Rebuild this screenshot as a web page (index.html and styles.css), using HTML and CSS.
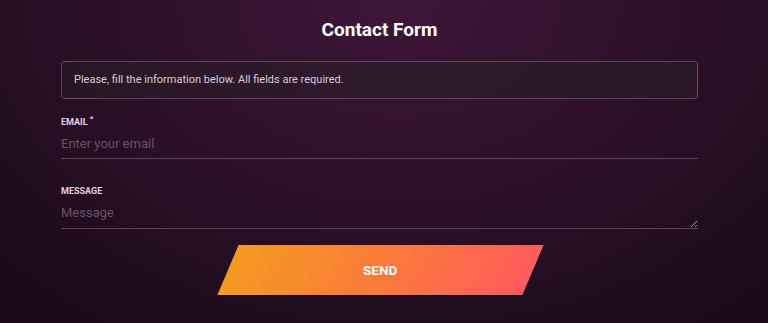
FILE: index.html
```html
<!DOCTYPE html>
<html lang="en">
<head>
  <meta charset="UTF-8">
  <title>Contact Form</title>
  <link rel="stylesheet" href="styles.css">
</head>
<body>
  <div class="wrap">
    <h1>Contact Form</h1>
    <div class="notice">Please, fill the information below. All fields are required.</div>
    <form>
      <div class="field">
        <label for="email">Email <sup>*</sup></label>
        <input type="email" id="email" placeholder="Enter your email">
      </div>
      <div class="field field-msg">
        <label for="message">Message</label>
        <textarea id="message" placeholder="Message"></textarea>
      </div>
      <button type="button" class="send"><span>Send</span></button>
    </form>
  </div>
</body>
</html>
```

FILE: styles.css
```css
html, body {
  height: 100%;
}
body {
  margin: 0;
  background: radial-gradient(ellipse 70% 120% at 52% 0%, #3e1639 0%, #2c1029 55%, #1b0b19 100%);
  color: #fff;
  font-family: Roboto, 'Liberation Sans', sans-serif;
  overflow: hidden;
}
.wrap {
  width: 637px;
  margin-left: 61px;
  padding-top: 20px;
}
h1 {
  margin: 0;
  font-size: 19px;
  line-height: 20px;
  font-weight: 700;
  text-align: center;
}
.notice {
  margin-top: 21px;
  height: 38px;
  box-sizing: border-box;
  padding: 0 12px;
  line-height: 36px;
  font-size: 11px;
  color: #d9c9d6;
  background-color: rgba(40, 30, 38, 0.55);
  border: 1px solid #5d4759;
  border-radius: 3px;
}
.field {
  margin-top: 17px;
}
.field-msg {
  margin-top: 26px;
}
label {
  display: block;
  font-size: 9px;
  line-height: 12px;
  font-weight: 700;
  text-transform: uppercase;
  color: #e6cfe3;
}
label sup {
  font-size: 8px;
  line-height: 0;
  vertical-align: 4px;
}
input, textarea {
  display: block;
  width: 100%;
  box-sizing: border-box;
  background: transparent;
  border: none;
  border-bottom: 1px solid #5a4157;
  color: #fff;
  font-family: Roboto, 'Liberation Sans', sans-serif;
  font-size: 13px;
  outline: none;
  padding: 0;
}
input {
  height: 31px;
}
textarea {
  height: 32px;
  padding-top: 8px;
  line-height: 16px;
}
input::placeholder, textarea::placeholder {
  color: #6b5168;
}
.send {
  display: block;
  width: 305px;
  height: 50px;
  margin: 16px 0 0 167px;
  border: none;
  transform: skewX(-23deg);
  background: linear-gradient(100deg, #f49a22 0%, #fa7b3a 50%, #ff5b5e 100%);
  color: #fff;
  font-family: Roboto, 'Liberation Sans', sans-serif;
  font-size: 13.5px;
  font-weight: 700;
  text-transform: uppercase;
  cursor: pointer;
}
.send span {
  display: inline-block;
  transform: skewX(23deg);
}
```
